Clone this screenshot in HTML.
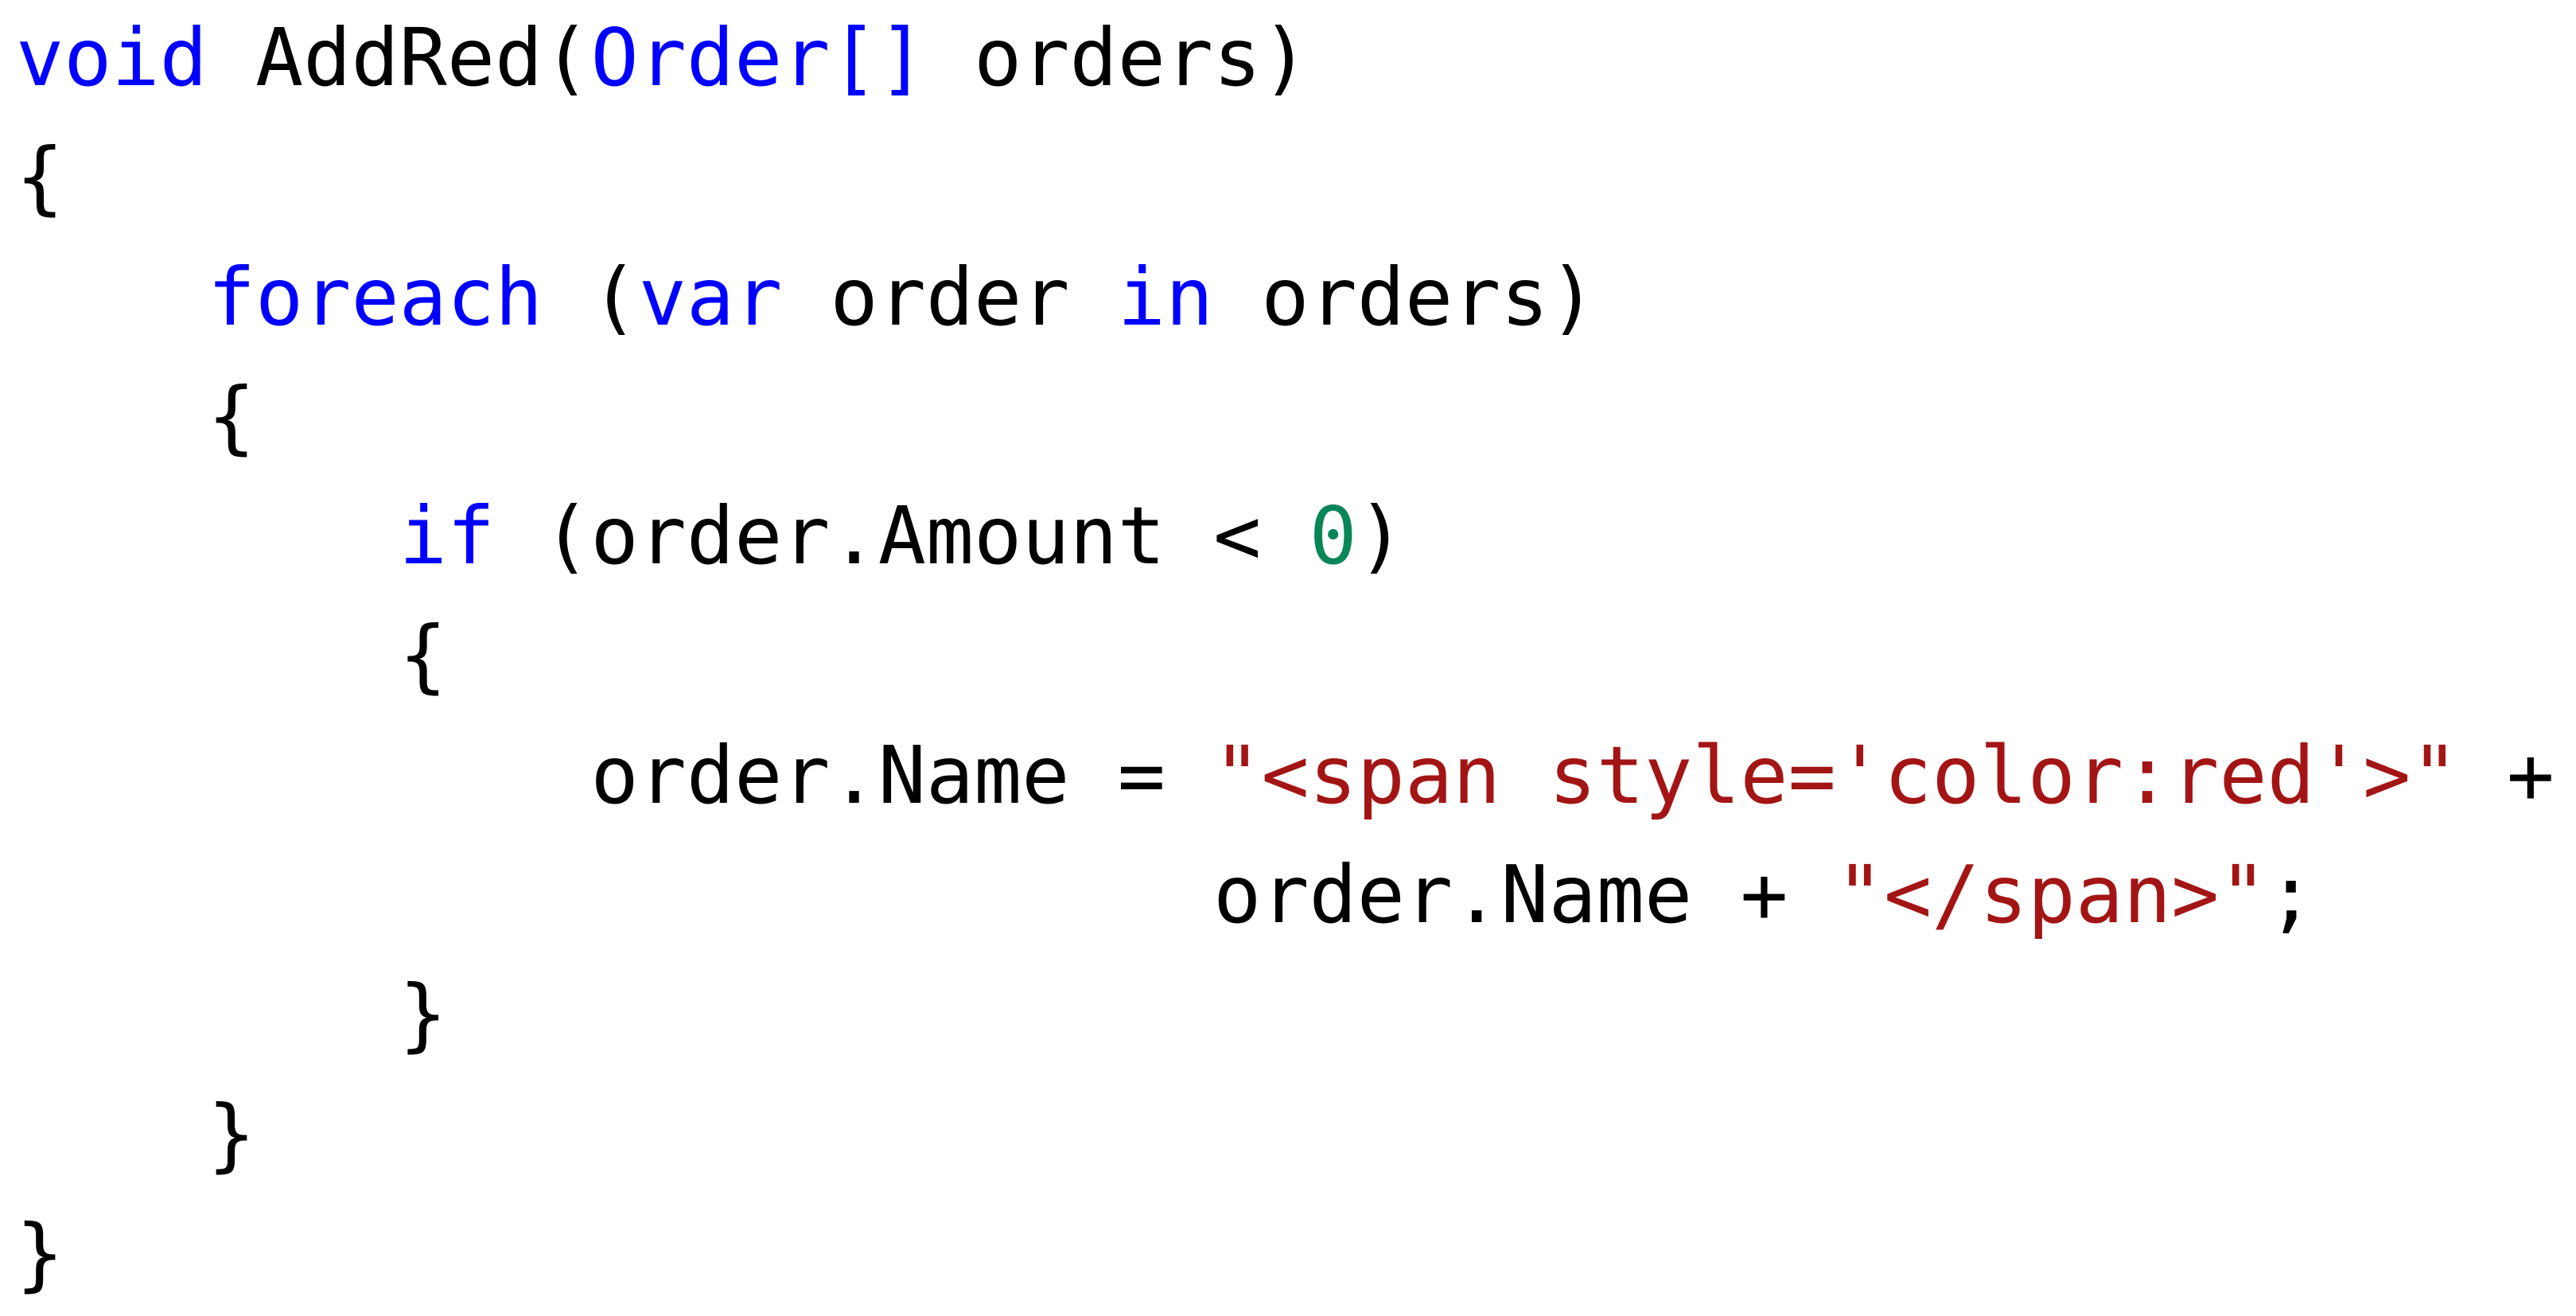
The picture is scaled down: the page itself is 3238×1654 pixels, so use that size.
<!DOCTYPE html>
<html><head><meta charset="utf-8"><style>
html,body{margin:0;padding:0;background:#fff;width:3238px;height:1654px;overflow:hidden}
pre{margin:0;position:absolute;left:20px;top:-2px;font-family:"DejaVu Sans Mono","Liberation Mono",monospace;font-size:100px;line-height:150.3px;color:#000}
.k{color:#0000ff}.s{color:#a31515}.n{color:#098658}
</style></head><body><pre><span class="k">void</span> AddRed(<span class="k">Order[]</span> orders)
{
    <span class="k">foreach</span> (<span class="k">var</span> order <span class="k">in</span> orders)
    {
        <span class="k">if</span> (order.Amount &lt; <span class="n">0</span>)
        {
            order.Name = <span class="s">"&lt;span style='color:red'&gt;"</span> +
                         order.Name + <span class="s">"&lt;/span&gt;"</span>;
        }
    }
}</pre></body></html>
